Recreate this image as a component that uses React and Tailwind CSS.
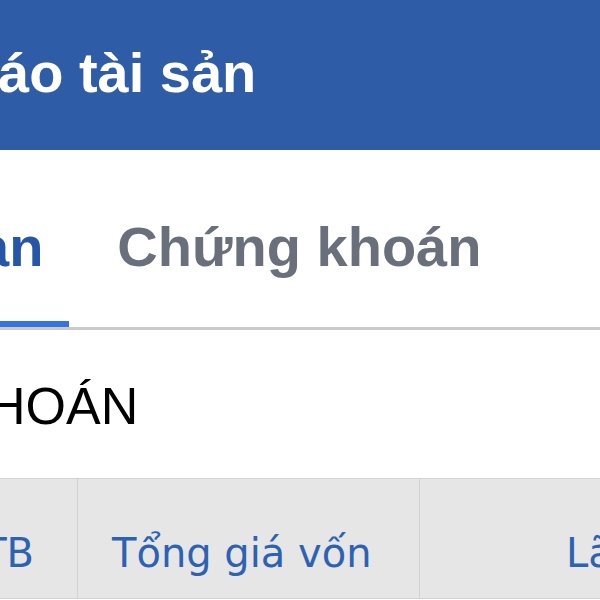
import React from "react";

const tabs = [
  { label: "an", active: true },
  { label: "Chứng khoán", active: false },
];

const App = () => {
  return (
    <div className="w-[600px] h-[600px] overflow-hidden bg-white font-['Liberation_Sans',Arial,sans-serif]">
      {/* header */}
      <div className="h-[150px] bg-[#2f5ca6] flex items-center pb-[4px]">
        <div className="ml-[-2px] text-[56px] leading-[56px] font-bold text-white whitespace-nowrap">
          áo tài sản
        </div>
      </div>

      {/* tabs */}
      <div className="flex border-b-[3px] border-[#cacaca]">
        <div className="h-[177px] flex flex-col">
          <div className="pt-[69px] ml-[-22px] pr-[26px] text-[56px] leading-[56px] font-bold text-[#2556a8] whitespace-nowrap">
            {tabs[0].label}
          </div>
          <div className="mt-auto h-[6px] bg-[#3574e0]" />
        </div>
        <div className="h-[177px] flex flex-col pl-[48px]">
          <div className="pt-[69px] text-[56px] leading-[56px] font-bold text-[#69707c] whitespace-nowrap">
            {tabs[1].label}
          </div>
        </div>
      </div>

      {/* section title */}
      <div className="h-[148px] pt-[50px]">
        <div className="ml-[-12px] text-[52px] leading-[52px] text-black whitespace-nowrap">
          HOÁN
        </div>
      </div>

      {/* table header */}
      <div className="flex h-[121px] bg-[#e6e6e6] border-y border-[#d2d2d2] font-['DejaVu_Sans',sans-serif] text-[40px] leading-[40px] text-[#2d62b2] whitespace-nowrap">
        <div className="w-[78px] shrink-0 border-r border-[#d2d2d2] pt-[54px] pr-[43px] flex justify-end">
          <span>TB</span>
        </div>
        <div className="w-[342px] shrink-0 border-r border-[#d2d2d2] pt-[54px] pl-[34px]">
          Tổng giá vốn
        </div>
        <div className="shrink-0 pt-[54px] pl-[146px]">Lãi/Lỗ</div>
      </div>
    </div>
  );
};

export default App;
